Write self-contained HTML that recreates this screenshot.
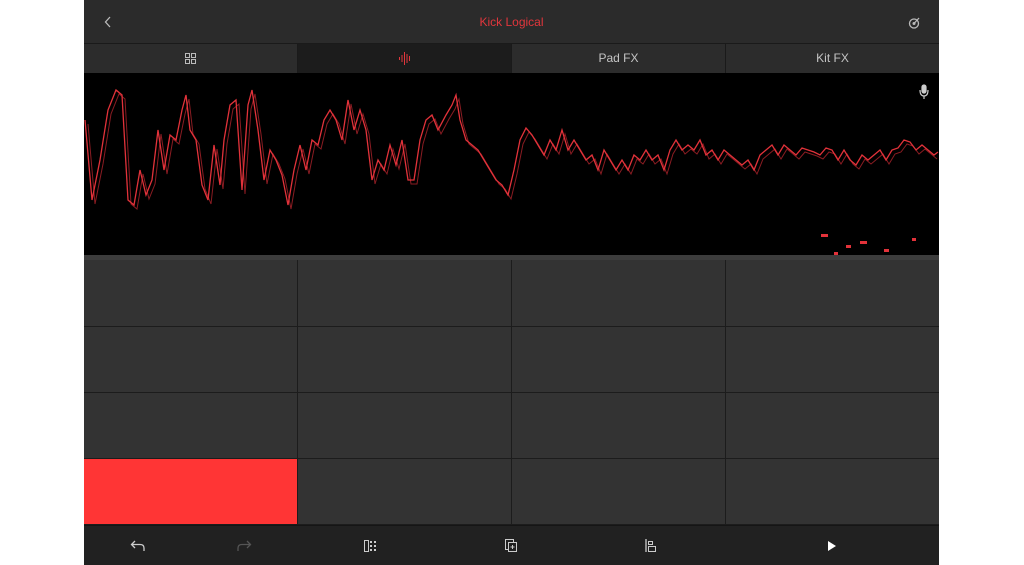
<!DOCTYPE html>
<html><head><meta charset="utf-8"><style>
*{margin:0;padding:0;box-sizing:border-box}
body{width:1024px;height:565px;background:#fff;position:relative;overflow:hidden;font-family:"Liberation Sans",sans-serif}
.app{position:absolute;left:84px;top:0;width:855px;height:565px;background:#2a2a2a}
.hdr{position:absolute;left:0;top:0;width:855px;height:44px;background:#2b2b2b;border-bottom:1px solid #1a1a1a}
.title{position:absolute;left:0;right:0;top:15px;text-align:center;color:#e2363c;font-size:12px}
.tabs{position:absolute;left:0;top:44px;width:855px;height:29px;display:flex;background:#2c2c2c}
.tab{flex:1;border-right:1px solid #1a1a1a;color:#c4c4c4;font-size:12px;text-align:center;line-height:29px;position:relative}
.tab.act{background:#1c1c1c}
.wave{position:absolute;left:0;top:73px;width:855px;height:182px;background:#000}
.strip{position:absolute;left:0;top:255px;width:855px;height:5px;background:#3c3c3c}
.pads{position:absolute;left:0;top:260px;width:855px;height:265px;background:#1c1c1c;display:grid;grid-template-columns:213px 213px 213px 213px;grid-template-rows:66px 65px 65px 65px;gap:1px}
.pad{background:#333}
.bar{position:absolute;left:0;top:525px;width:855px;height:40px;background:#212121;border-top:1px solid #151515}
</style></head><body>
<div class="app">
<div class="hdr">
<svg style="position:absolute;left:20px;top:16px" width="8" height="12"><path d="M6 1 L1.5 6 L6 11" stroke="#bbb" stroke-width="1.3" fill="none"/></svg>
<div class="title">Kick Logical</div>
<svg style="position:absolute;left:823px;top:16px" width="14" height="14"><circle cx="7" cy="7.5" r="4.5" stroke="#bbb" stroke-width="1.3" fill="none"/><circle cx="7" cy="7.5" r="1.5" fill="#bbb"/><path d="M7 7.5 L12 2" stroke="#bbb" stroke-width="1.3"/></svg>
</div>
<div class="tabs">
<div class="tab"><svg style="position:absolute;left:101px;top:9px" width="11" height="11"><rect x=".5" y=".5" width="4" height="4" fill="none" stroke="#bbb"/><rect x="6.5" y=".5" width="4" height="4" fill="none" stroke="#bbb"/><rect x=".5" y="6.5" width="4" height="4" fill="none" stroke="#bbb"/><rect x="6.5" y="6.5" width="4" height="4" fill="none" stroke="#bbb"/></svg></div>
<div class="tab act"><svg style="position:absolute;left:100px;top:7px" width="14" height="15"><path d="M1.5 6v3M4 4v7M6.5 1v13M9 3v9M11.5 5v5" stroke="#e2363c" stroke-width="1"/></svg></div>
<div class="tab">Pad FX</div>
<div class="tab" style="border-right:none">Kit FX</div>
</div>
<div class="wave"></div>
<div class="strip"></div>
<div class="pads">
<div class="pad"></div><div class="pad"></div><div class="pad"></div><div class="pad"></div>
<div class="pad"></div><div class="pad"></div><div class="pad"></div><div class="pad"></div>
<div class="pad"></div><div class="pad"></div><div class="pad"></div><div class="pad"></div>
<div class="pad" style="background:#ff3535"></div><div class="pad"></div><div class="pad"></div><div class="pad"></div>
</div>
<div class="bar">
<svg style="position:absolute;left:46px;top:14px" width="16" height="12"><path d="M5 1 L1.5 4.5 L5 8 M1.5 4.5 H10 Q14 4.5 14 8 V11" stroke="#ccc" stroke-width="1.3" fill="none"/></svg>
<svg style="position:absolute;left:152px;top:14px" width="16" height="12"><path d="M11 1 L14.5 4.5 L11 8 M14.5 4.5 H6 Q2 4.5 2 8 V11" stroke="#555" stroke-width="1.3" fill="none"/></svg>
<svg style="position:absolute;left:280px;top:14px" width="14" height="12"><rect x=".5" y=".5" width="4" height="11" fill="none" stroke="#ccc"/><path d="M6 1h2v2H6zM10 1h2v2h-2zM6 5h2v2H6zM10 5h2v2h-2zM6 9h2v2H6zM10 9h2v2h-2z" fill="#ccc"/></svg>
<svg style="position:absolute;left:421px;top:13px" width="13" height="14"><rect x=".5" y=".5" width="8" height="10" fill="none" stroke="#ccc"/><rect x="3.5" y="3.5" width="8" height="9" fill="#212121" stroke="#ccc"/><path d="M7.5 6v4M5.5 8h4" stroke="#ccc"/></svg>
<svg style="position:absolute;left:561px;top:13px" width="12" height="14"><path d="M1 0v13" stroke="#ccc" stroke-width="1.3"/><rect x="3.5" y="2.5" width="4" height="3" fill="none" stroke="#ccc"/><rect x="3.5" y="7.5" width="7" height="5" fill="none" stroke="#ccc"/></svg>
<svg style="position:absolute;left:743px;top:14px" width="10" height="12"><path d="M1 1 L9 6 L1 11Z" fill="#fff"/></svg>
</div>
</div>
<svg style="position:absolute;left:0;top:0" width="1024" height="565">
<path fill="none" stroke="#8a1c22" stroke-width="1" transform="translate(3,4)" d="M85 120 L92 200 100 160 108 110 116 90 122 95 128 200 134 205 140 170 146 195 152 180 158 130 164 170 170 135 176 140 182 110 186 95 190 130 196 140 202 185 208 200 214 145 220 185 224 140 230 105 236 100 242 190 248 105 252 90 258 130 264 180 270 150 276 160 282 175 288 205 294 170 300 145 306 170 312 140 318 145 324 120 330 110 336 120 342 140 348 100 354 130 360 110 366 130 372 180 378 160 384 170 390 145 396 165 402 140 408 180 414 180 420 140 426 120 432 115 438 130 446 115 452 105 456 95 460 120 466 140 472 145 478 150 484 160 490 170 496 180 502 185 508 195 514 170 520 140 526 128 532 135 538 145 544 155 550 140 556 150 562 130 568 150 574 140 580 150 586 160 592 155 598 170 604 150 610 160 616 170 622 160 628 170 634 155 640 160 646 150 652 160 658 155 664 170 670 150 676 140 682 150 688 145 694 150 700 140 706 155 712 150 718 160 724 150 730 155 736 160 742 165 748 160 754 170 760 155 766 150 772 145 778 155 784 145 790 150 796 155 802 148 808 150 814 152 820 155 826 148 832 150 838 160 844 150 850 160 856 165 862 155 868 160 874 155 880 150 886 160 892 150 898 148 904 140 910 142 916 150 922 145 928 150 934 155"/>
<path fill="none" stroke="#e2323a" stroke-width="1.3" d="M85 120 L92 200 100 160 108 110 116 90 122 95 128 200 134 205 140 170 146 195 152 180 158 130 164 170 170 135 176 140 182 110 186 95 190 130 196 140 202 185 208 200 214 145 220 185 224 140 230 105 236 100 242 190 248 105 252 90 258 130 264 180 270 150 276 160 282 175 288 205 294 170 300 145 306 170 312 140 318 145 324 120 330 110 336 120 342 140 348 100 354 130 360 110 366 130 372 180 378 160 384 170 390 145 396 165 402 140 408 180 414 180 420 140 426 120 432 115 438 130 446 115 452 105 456 95 460 120 466 140 472 145 478 150 484 160 490 170 496 180 502 185 508 195 514 170 520 140 526 128 532 135 538 145 544 155 550 140 556 150 562 130 568 150 574 140 580 150 586 160 592 155 598 170 604 150 610 160 616 170 622 160 628 170 634 155 640 160 646 150 652 160 658 155 664 170 670 150 676 140 682 150 688 145 694 150 700 140 706 155 712 150 718 160 724 150 730 155 736 160 742 165 748 160 754 170 760 155 766 150 772 145 778 155 784 145 790 150 796 155 802 148 808 150 814 152 820 155 826 148 832 150 838 160 844 150 850 160 856 165 862 155 868 160 874 155 880 150 886 160 892 150 898 148 904 140 910 142 916 150 922 145 928 150 934 155 938 152"/>
<g fill="#e2323a"><rect x="821" y="234" width="7" height="3"/><rect x="834" y="252" width="4" height="3"/><rect x="846" y="245" width="5" height="3"/><rect x="860" y="241" width="7" height="3"/><rect x="884" y="249" width="5" height="3"/><rect x="912" y="238" width="4" height="3"/></g>
<g stroke="#ccc" fill="none" stroke-width="1.2"><rect x="922" y="85" width="4" height="8" rx="2" fill="#ccc"/><path d="M920 90 Q920 96 924 96 Q928 96 928 90 M924 96v3"/></g>
</svg>
</body></html>
